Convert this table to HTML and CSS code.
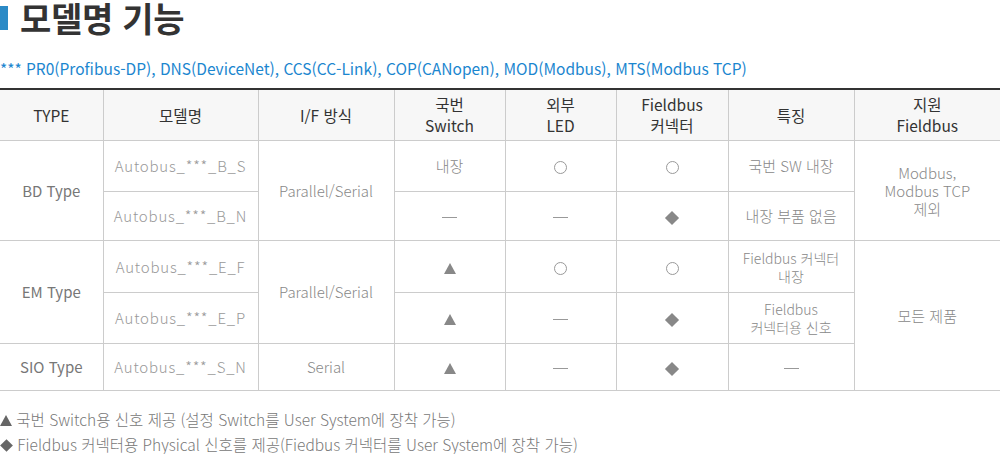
FILE: index.html
```html
<!DOCTYPE html>
<html lang="ko">
<head>
<meta charset="utf-8">
<link rel="stylesheet" href="styles.css">
</head>
<body>
<h1 class="title"><span class="bar"></span>모델명 기능</h1>
<p class="legend">*** PR0(Profibus-DP), DNS(DeviceNet), CCS(CC-Link), COP(CANopen), MOD(Modbus), MTS(Modbus TCP)</p>
<table class="spec">
  <colgroup>
    <col style="width:103px"><col style="width:155px"><col style="width:136px"><col style="width:111px">
    <col style="width:111px"><col style="width:112px"><col style="width:126px"><col style="width:146px">
  </colgroup>
  <thead>
    <tr class="h">
      <th>TYPE</th><th>모델명</th><th>I/F 방식</th><th>국번<br>Switch</th><th>외부<br>LED</th><th>Fieldbus<br>커넥터</th><th>특징</th><th>지원<br>Fieldbus</th>
    </tr>
  </thead>
  <tbody>
    <tr class="r1">
      <td rowspan="2" class="type">BD Type</td><td class="model">Autobus_***_B_S</td><td rowspan="2">Parallel/Serial</td>
      <td>내장</td><td><i class="circ"></i></td><td><i class="circ"></i></td><td>국번 SW 내장</td>
      <td rowspan="2" class="sup">Modbus,<br>Modbus TCP<br>제외</td>
    </tr>
    <tr class="r2">
      <td class="model">Autobus_***_B_N</td><td><i class="dash"></i></td><td><i class="dash"></i></td><td><i class="dia"></i></td><td>내장 부품 없음</td>
    </tr>
    <tr class="r3">
      <td rowspan="2" class="type">EM Type</td><td class="model">Autobus_***_E_F</td><td rowspan="2">Parallel/Serial</td>
      <td><i class="tri"></i></td><td><i class="circ"></i></td><td><i class="circ"></i></td><td class="two">Fieldbus 커넥터<br>내장</td>
      <td rowspan="3">모든 제품</td>
    </tr>
    <tr class="r4">
      <td class="model">Autobus_***_E_P</td><td><i class="tri"></i></td><td><i class="dash"></i></td><td><i class="dia"></i></td><td class="two">Fieldbus<br>커넥터용 신호</td>
    </tr>
    <tr class="r5">
      <td class="type">SIO Type</td><td class="model">Autobus_***_S_N</td><td>Serial</td><td><i class="tri"></i></td><td><i class="dash"></i></td><td><i class="dia"></i></td><td><i class="dash"></i></td>
    </tr>
  </tbody>
</table>
<ul class="notes">
  <li><i class="tri sm"></i> 국번 Switch용 신호 제공 (설정 Switch를 User System에 장착 가능)</li>
  <li><i class="dia sm"></i> Fieldbus 커넥터용 Physical 신호를 제공(Fiedbus 커넥터를 User System에 장착 가능)</li>
</ul>
</body>
</html>
```
FILE: styles.css
```css
html, body {
  margin: 0;
  padding: 0;
  background: #fff;
}
body {
  font-family: "Noto Sans CJK KR", "Noto Sans", sans-serif;
  color: #777;
}
.title {
  display: flex;
  align-items: center;
  gap: 12px;
  margin: 0;
  height: 36px;
  font-size: 34px;
  font-weight: 700;
  color: #333;
  line-height: 36px;
  letter-spacing: -0.3px;
}
.title .bar {
  display: block;
  width: 8px;
  height: 24px;
  background: #2b8ac6;
}
.legend {
  margin: 22px 0 0;
  font-size: 15.5px;
  line-height: 20px;
  color: #1b86cf;
  font-weight: 400;
}
.spec {
  margin-top: 10px;
  width: 1000px;
  table-layout: fixed;
  border-collapse: collapse;
  border-top: 2px solid #333;
  border-bottom: 1px solid #ccc;
}
.spec th, .spec td {
  border: 1px solid #ccc;
  text-align: center;
  vertical-align: middle;
  padding: 0;
  font-size: 15px;
  line-height: 20px;
}
.spec tr > :first-child { border-left: none; }
.spec tr > :last-child { border-right: none; }
.spec th {
  background: #f7f7f7;
  color: #333;
  font-weight: 400;
  font-size: 15.5px;
  line-height: 21px;
  height: 50px;
}
.spec td {
  color: #888;
  font-weight: 300;
}
.spec td.type { color: #777; font-weight: 400; }
.spec td.model { color: #999; letter-spacing: 0.8px; }
.spec td.two { font-size: 14px; line-height: 18px; }
.spec td.sup { font-size: 15px; line-height: 18px; }
.spec tr.r1 td { height: 50px; }
.spec tr.r2 td { height: 48px; }
.spec tr.r3 td { height: 51px; }
.spec tr.r4 td { height: 50px; }
.spec tr.r5 td { height: 46px; }

i { display: inline-block; vertical-align: middle; }
.circ {
  width: 11px; height: 11px;
  border: 1px solid #999;
  border-radius: 50%;
}
.dash {
  width: 15px; height: 1px;
  background: #999;
}
.dia {
  width: 10px; height: 10px;
  background: #888;
  transform: rotate(45deg);
}
.tri {
  width: 0; height: 0;
  border-left: 6px solid transparent;
  border-right: 6px solid transparent;
  border-bottom: 11px solid #888;
}
.notes {
  list-style: none;
  margin: 16px 0 0;
  padding: 0;
  font-size: 15.5px;
  line-height: 25px;
  color: #777;
  font-weight: 300;
}
.notes .tri.sm {
  border-left-width: 6px; border-right-width: 6px; border-bottom: 11px solid #666;
  vertical-align: 0;
}
.notes .dia.sm {
  width: 9px; height: 9px; background: #666; margin: 0 2px;
  vertical-align: 1px;
}
```
